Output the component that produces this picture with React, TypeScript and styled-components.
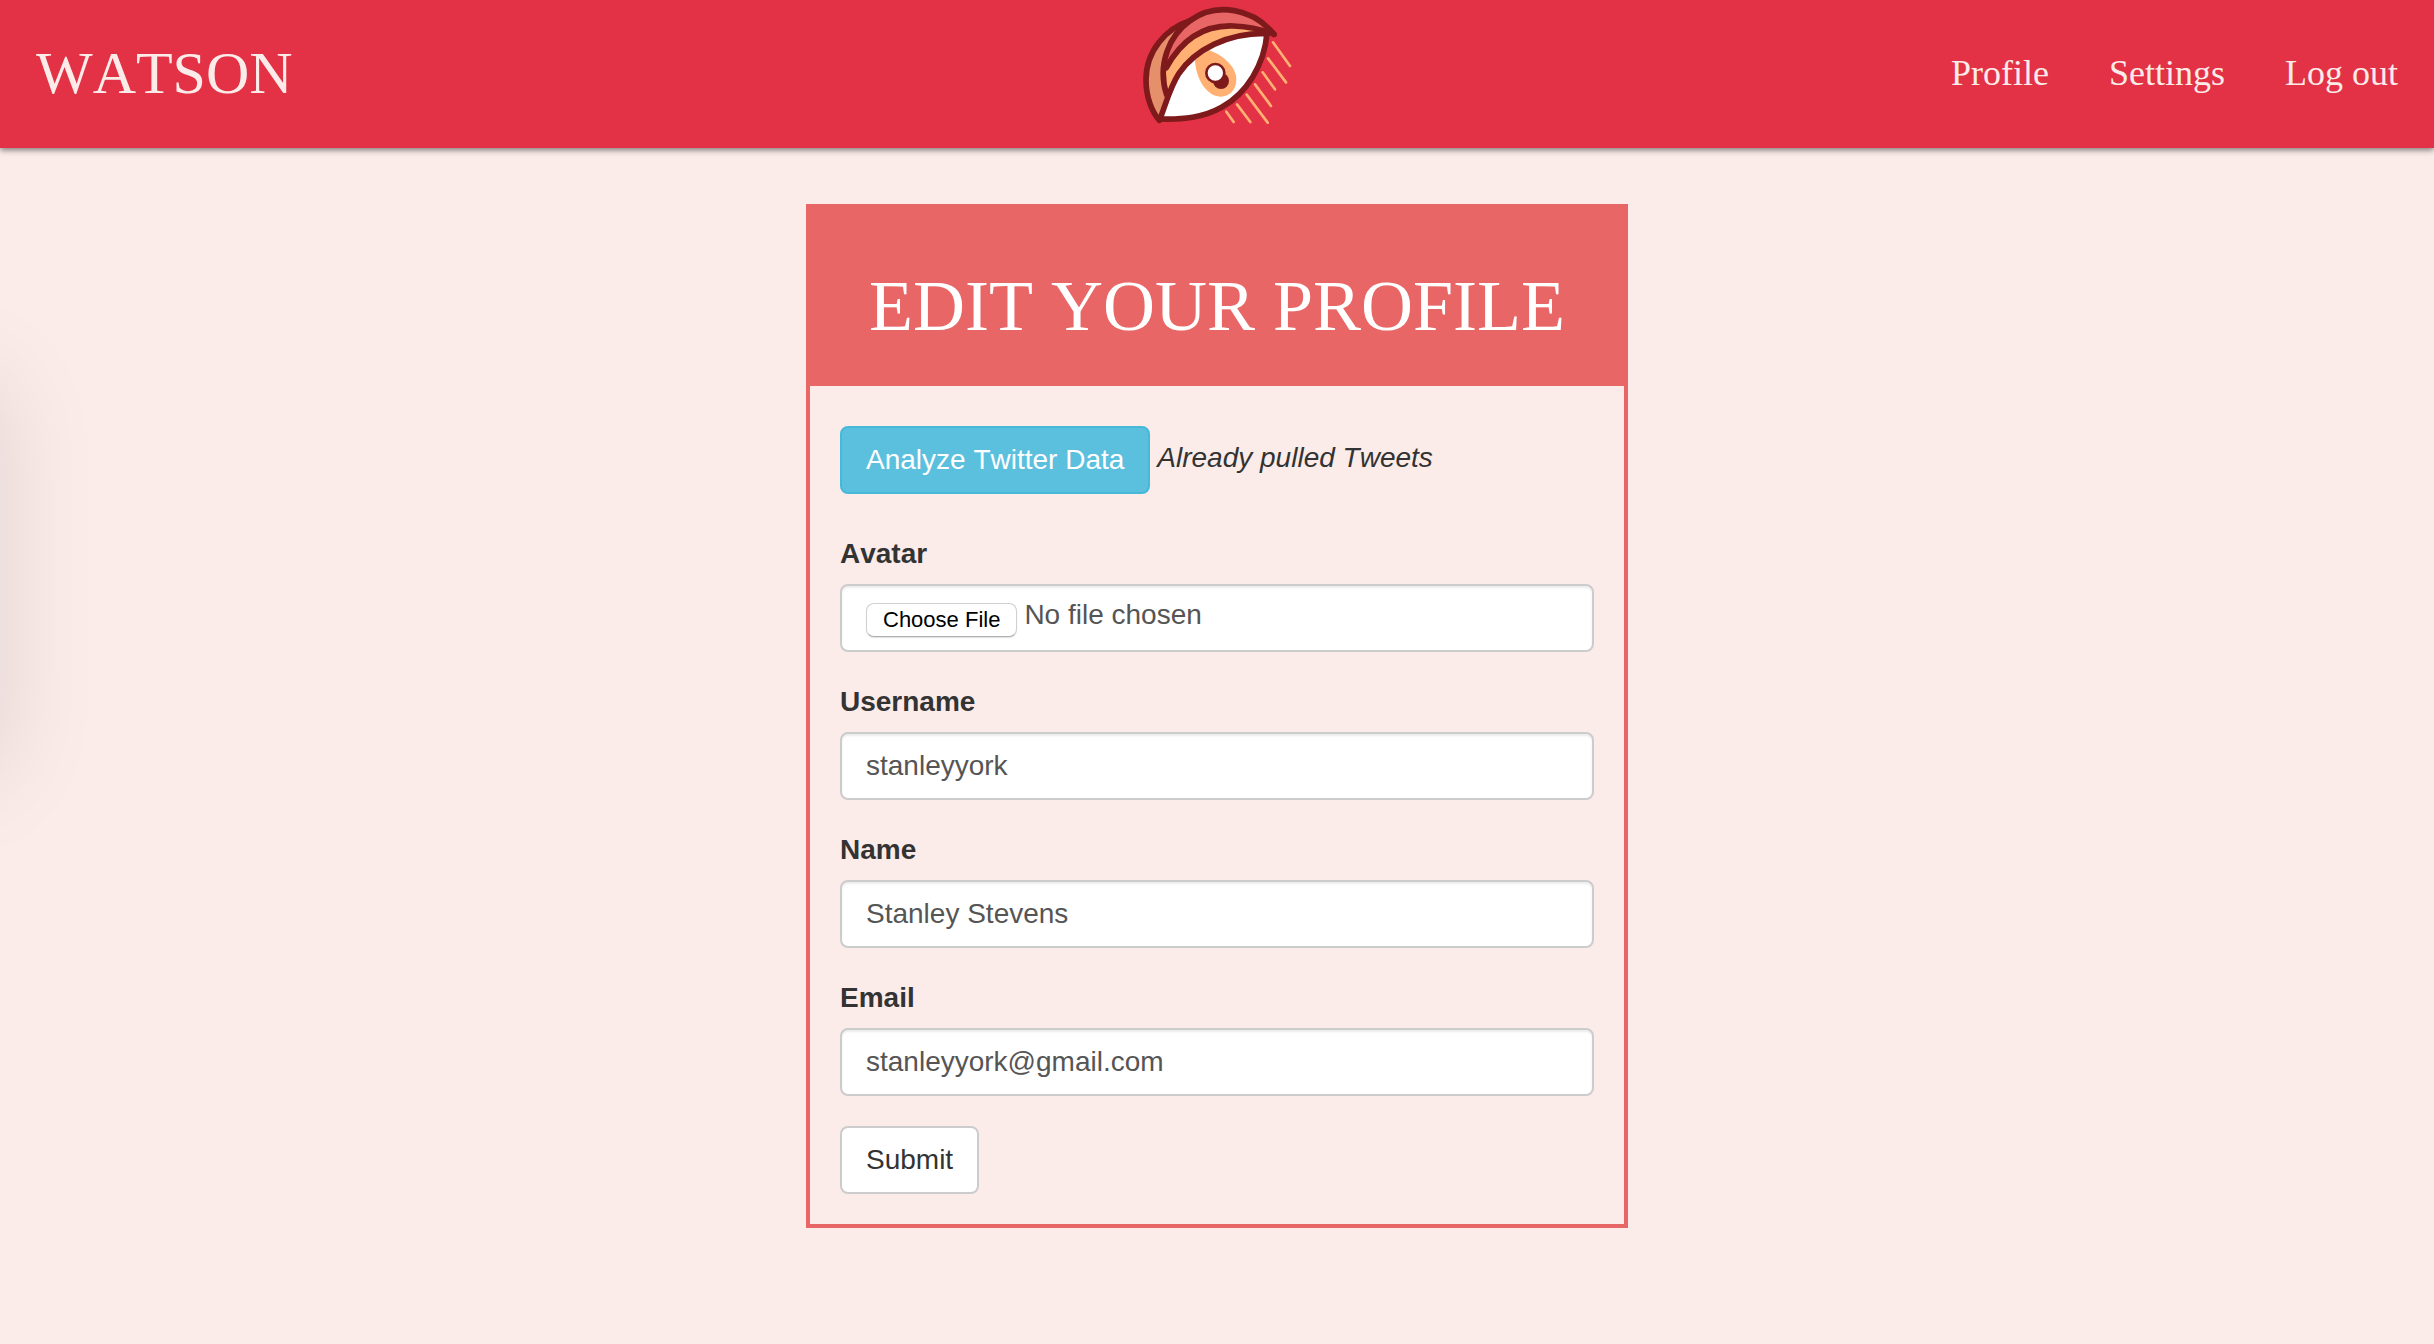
import React from "react";
import styled, { createGlobalStyle } from "styled-components";

const sans = `"Liberation Sans", Arial, sans-serif`;
const serif = `"Liberation Serif", "Times New Roman", serif`;

const GlobalStyle = createGlobalStyle`
  *, *::before, *::after { box-sizing: border-box; }
  body {
    margin: 0;
    background: #fbecea;
    color: #333;
    font: 28px/40px ${sans};
    font-kerning: none;
    overflow-x: hidden;
  }
`;

const Header = styled.header`
  display: grid;
  grid-template-columns: 1fr auto 1fr;
  align-items: center;
  height: 148px;
  padding: 0 36px 2px;
  background: #e33245;
  box-shadow: 0 2px 6px rgba(0, 0, 0, 0.5);
  font-family: ${serif};
`;

const Brand = styled.a`
  color: #fbecea;
  font-size: 60px;
  line-height: 68px;
  text-decoration: none;
`;

const LogoLink = styled.a`
  display: block;
  align-self: start;
  padding-top: 5px;

  svg {
    display: block;
    width: 150px;
    height: 120px;
  }
`;

const Nav = styled.nav`
  display: flex;
  justify-content: flex-end;
  gap: 60px;
`;

const NavLink = styled.a`
  color: #fbecea;
  font-size: 36px;
  line-height: 44px;
  text-decoration: none;
`;

const Drawer = styled.aside`
  position: fixed;
  top: 382px;
  right: 100%;
  width: 400px;
  height: 392px;
  box-shadow: 0 0 96px rgba(0, 0, 0, 0.11);
`;

const Main = styled.main`
  display: flex;
  justify-content: center;
  padding: 56px 30px 60px;
`;

const Card = styled.section`
  width: 100%;
  max-width: 822px;
  border: 4px solid #e86766;
`;

const Title = styled.h1`
  margin: 0;
  padding: 58px 0 40px;
  background: #e86766;
  color: #fff;
  font: 400 72px/80px ${serif};
  font-kerning: none;
  text-align: center;
`;

const Form = styled.form`
  display: flex;
  flex-direction: column;
  gap: 30px;
  padding: 40px 30px 30px;
`;

const Actions = styled.div`
  display: flex;
  gap: 7px;
  margin-bottom: 10px;
`;

const Button = styled.button<{ $info?: boolean }>`
  align-self: flex-start;
  height: 68px;
  padding: 0 24px;
  border: 2px solid ${(p) => (p.$info ? "#46b8da" : "#ccc")};
  border-radius: 8px;
  background: ${(p) => (p.$info ? "#5bc0de" : "#fff")};
  color: ${(p) => (p.$info ? "#fff" : "#333")};
  font: 28px/40px ${sans};
  font-kerning: none;
  white-space: nowrap;
`;

const Status = styled.em`
  padding-top: 12px;
`;

const Field = styled.div`
  display: flex;
  flex-direction: column;
  gap: 10px;
`;

const Label = styled.label`
  font-weight: 700;
`;

const Input = styled.input`
  width: 100%;
  height: 68px;
  padding: 12px 24px;
  border: 2px solid #ccc;
  border-radius: 8px;
  background: #fff;
  box-shadow: inset 0 2px 2px rgba(0, 0, 0, 0.075);
  color: #555;
  font: 28px/40px ${sans};
  font-kerning: none;
`;

const FileInput = styled(Input)`
  padding: 9px 24px 15px;

  &::file-selector-button {
    height: 34px;
    margin: 0 7px 0 0;
    padding: 0 16px;
    border: 1px solid #d0d0d0;
    border-bottom-color: #b0b0b0;
    border-radius: 8px;
    background: #fff;
    box-shadow: 0 1px 1px rgba(0, 0, 0, 0.12);
    color: #000;
    font: 22px/32px ${sans};
    font-kerning: none;
    vertical-align: -3px;
  }
`;

const EyeLogo = () => (
  <svg viewBox="66 15 450 360" role="img" aria-label="Watson" fill="none" strokeLinecap="round" strokeLinejoin="round">
    <path d="M210 62C140 85 78 150 78 240C78 290 95 335 118 361L148 290C138 270 133 250 133 220C133 155 160 95 210 62Z" fill="#e58f6b" />
    <path d="M142 195C150 130 180 80 210 62C290 10 400 30 462 103C430 90 390 80 340 78C260 75 190 110 142 195Z" fill="#e86766" />
    <path d="M138 205C190 110 260 75 340 78C390 80 430 90 462 103L441 100C320 98 200 160 148 285C138 262 134 235 138 205Z" fill="#ffb072" />
    <path d="M441 100C320 98 225 150 177 220C150 262 140 305 125 357C190 359 250 353 305 322C380 280 433 195 441 100Z" fill="#fff" />
    <path d="M225 178Q244 160 267 150C312 167 349 202 349 238C349 268 330 290 302 290C258 290 226 232 225 178Z" fill="#ffb072" />
    <g stroke="#7e1a1b" strokeWidth="17">
      <path d="M210 62C140 85 78 150 78 240C78 290 95 335 118 361" />
      <path d="M462 103C400 26 290 4 210 62C150 105 110 190 140 285" />
      <path d="M139 203C190 110 260 75 340 78C390 80 430 90 462 103" />
      <path d="M441 100C320 98 225 150 177 220C150 262 140 305 120 357C190 359 250 353 305 322C380 280 433 195 441 100Z" />
    </g>
    <circle cx="303" cy="243" r="24" fill="#7e1a1b" />
    <circle cx="286" cy="219" r="27" fill="#fff" stroke="#7e1a1b" strokeWidth="8" />
    <path
      d="M459 127L510 198M444 175L498 247M428 217L465 268M405 253L453 318M380 284L443 368M351 313L391 366M319 335L341 366"
      stroke="#ffb072"
      strokeWidth="8"
    />
  </svg>
);

const links = ["Profile", "Settings", "Log out"];

const fields = [
  { id: "username", label: "Username", type: "text", value: "stanleyyork" },
  { id: "name", label: "Name", type: "text", value: "Stanley Stevens" },
  { id: "email", label: "Email", type: "email", value: "stanleyyork@gmail.com" },
];

export default function App() {
  return (
    <>
      <GlobalStyle />
      <Header>
        <Brand href="#">WATSON</Brand>
        <LogoLink href="#">
          <EyeLogo />
        </LogoLink>
        <Nav>
          {links.map((text) => (
            <NavLink key={text} href="#">
              {text}
            </NavLink>
          ))}
        </Nav>
      </Header>
      <Drawer />
      <Main>
        <Card>
          <Title>EDIT YOUR PROFILE</Title>
          <Form onSubmit={(e) => e.preventDefault()}>
            <Actions>
              <Button type="button" $info>
                Analyze Twitter Data
              </Button>
              <Status>Already pulled Tweets</Status>
            </Actions>
            <Field>
              <Label htmlFor="avatar">Avatar</Label>
              <FileInput id="avatar" type="file" />
            </Field>
            {fields.map((f) => (
              <Field key={f.id}>
                <Label htmlFor={f.id}>{f.label}</Label>
                <Input id={f.id} type={f.type} defaultValue={f.value} />
              </Field>
            ))}
            <Button type="submit">Submit</Button>
          </Form>
        </Card>
      </Main>
    </>
  );
}
